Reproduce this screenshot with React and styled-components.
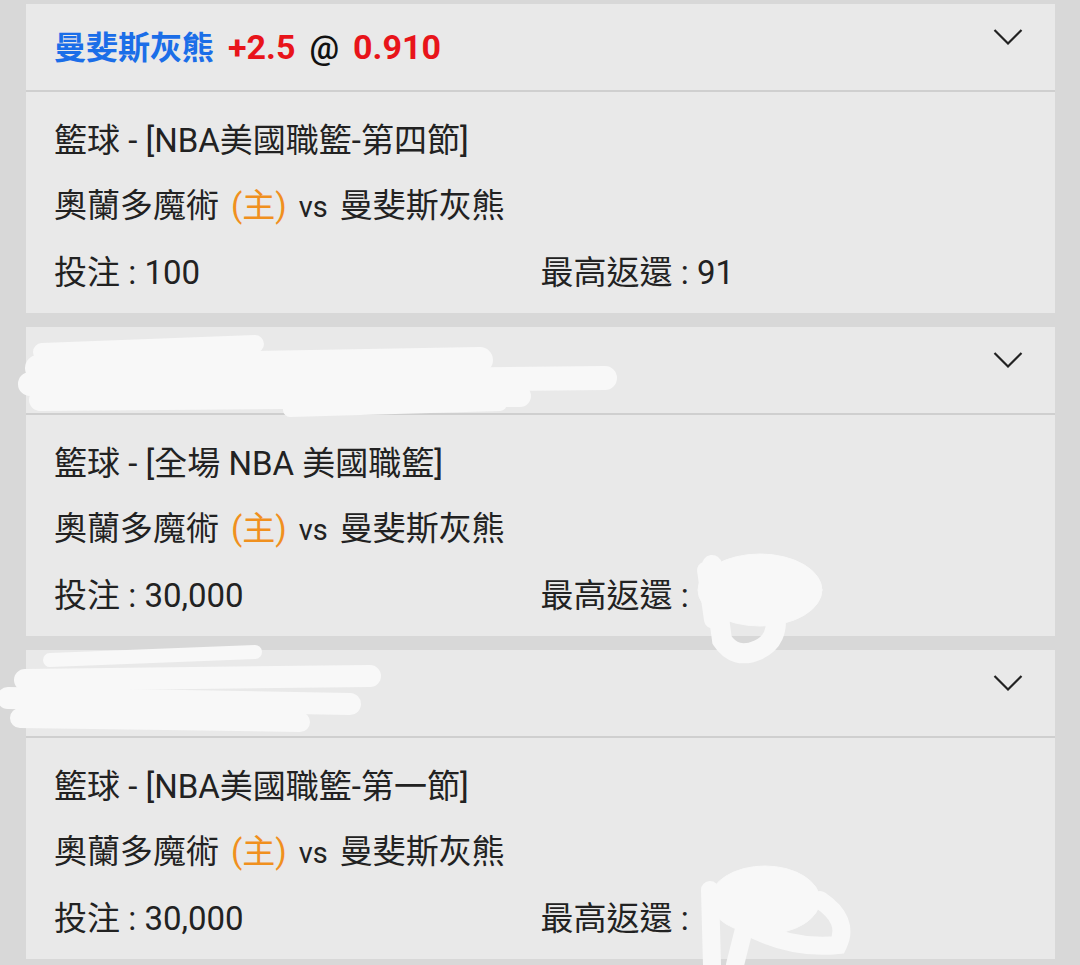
import React from "react";
import styled, { createGlobalStyle } from "styled-components";

const GlobalStyle = createGlobalStyle`
  html, body {
    margin: 0;
    padding: 0;
    background: #d8d8d8;
  }
  body {
    font-family: Roboto, "Noto Sans CJK TC", "Noto Sans", sans-serif;
    color: #222;
  }
`;

const bets = [
  {
    id: 1,
    pick: { team: "曼斐斯灰熊", line: "+2.5", odds: "0.910" },
    league: "籃球 - [NBA美國職籃-第四節]",
    home: "奧蘭多魔術",
    away: "曼斐斯灰熊",
    stake: "100",
    maxReturn: "91",
  },
  {
    id: 2,
    pick: null,
    league: "籃球 - [全場 NBA 美國職籃]",
    home: "奧蘭多魔術",
    away: "曼斐斯灰熊",
    stake: "30,000",
    maxReturn: "",
  },
  {
    id: 3,
    pick: null,
    league: "籃球 - [NBA美國職籃-第一節]",
    home: "奧蘭多魔術",
    away: "曼斐斯灰熊",
    stake: "30,000",
    maxReturn: "",
  },
];

const Chevron = () => (
  <svg width="30" height="18" viewBox="0 0 30 18">
    <path
      d="M1.5 2 L15 15.5 L28.5 2"
      fill="none"
      stroke="#222"
      strokeWidth="2.2"
    />
  </svg>
);

// the white redaction marks drawn over the screenshot
const Scribbles = () => (
  <ScribbleLayer width="1080" height="965" viewBox="0 0 1080 965">
    <g
      fill="none"
      stroke="#f8f8f8"
      strokeLinecap="round"
      strokeLinejoin="round"
    >
      <path d="M42 352 L255 344" strokeWidth="18" />
      <path d="M38 368 L480 360" strokeWidth="26" />
      <path d="M30 384 L605 378" strokeWidth="24" />
      <path d="M40 400 L520 396" strokeWidth="22" />
      <path d="M290 410 L500 404" strokeWidth="14" />

      <path d="M50 660 L255 652" strokeWidth="14" />
      <path d="M25 680 L370 676" strokeWidth="22" />
      <path d="M8 698 L350 704" strokeWidth="22" />
      <path d="M20 718 L300 722" strokeWidth="20" />
    </g>
    <g fill="#f8f8f8" stroke="#f8f8f8" strokeLinecap="round">
      <ellipse cx="760" cy="590" rx="62" ry="36" />
      <path
        d="M712 565 L722 640 Q735 660 758 650 Q780 640 775 612"
        fill="none"
        strokeWidth="20"
      />
      <path d="M705 570 L712 620" fill="none" strokeWidth="16" />
      <ellipse cx="765" cy="900" rx="55" ry="34" />
      <path d="M710 890 L712 965" fill="none" strokeWidth="18" />
      <path
        d="M735 965 L745 925 Q790 950 838 945 Q850 920 820 900"
        fill="none"
        strokeWidth="18"
      />
    </g>
  </ScribbleLayer>
);

const App = () => (
  <>
    <GlobalStyle />
    <Page>
      {bets.map((bet) => (
        <Card key={bet.id}>
          <Header>
            <Pick>
              {bet.pick && (
                <>
                  <Team>{bet.pick.team}</Team>
                  <Odds>{bet.pick.line}</Odds>
                  <At>@</At>
                  <Odds>{bet.pick.odds}</Odds>
                </>
              )}
            </Pick>
            <Chevron />
          </Header>
          <Body>
            <Row>{bet.league}</Row>
            <Row>
              {bet.home}
              <Home>(主)</Home>
              <Vs>vs</Vs>
              {bet.away}
            </Row>
            <Amounts>
              <span>投注 : {bet.stake}</span>
              <span>最高返還 : {bet.maxReturn}</span>
            </Amounts>
          </Body>
        </Card>
      ))}
      <Scribbles />
    </Page>
  </>
);

export default App;

const Page = styled.div`
  position: relative;
  display: flex;
  flex-direction: column;
  gap: 14px;
  padding: 4px 25px 0 26px;
  height: 961px;
  overflow: hidden;
`;

const Card = styled.div`
  background: #e9e9e9;
  flex-shrink: 0;
`;

const Header = styled.div`
  height: 86px;
  display: flex;
  align-items: center;
  justify-content: space-between;
  padding: 0 32px 0 28px;
  border-bottom: 2px solid #cfcfcf;
  box-sizing: content-box;

  svg {
    margin-top: -20px;
  }
`;

const Pick = styled.div`
  display: flex;
  align-items: baseline;
  font-size: 32px;
  font-weight: 700;
  margin-top: -4px;
`;

const Team = styled.span`
  color: #1b6ee8;
  margin-right: 14px;
`;

const Odds = styled.span`
  color: #e8141a;
  font-size: 34px;
`;

const At = styled.span`
  color: #111;
  font-weight: 500;
  font-size: 33px;
  margin: 0 14px;
`;

const Body = styled.div`
  padding: 16px 28px 10px;
  height: 195px;
  font-size: 33px;
  line-height: 65px;
  color: #222;
`;

const Row = styled.div`
  white-space: nowrap;
`;

const Home = styled.span`
  color: #f0901e;
  margin: 0 12px;
`;

const Vs = styled.span`
  font-size: 29px;
  margin-right: 12px;
`;

const Amounts = styled.div`
  display: grid;
  grid-template-columns: 1fr 1fr;
`;

const ScribbleLayer = styled.svg`
  position: absolute;
  top: 0;
  left: 0;
  pointer-events: none;
`;
